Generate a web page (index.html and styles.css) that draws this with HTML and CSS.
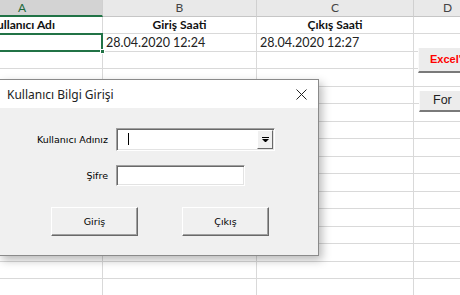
FILE: index.html
```html
<!DOCTYPE html>
<html>
<head>
<meta charset="utf-8">
<link rel="stylesheet" href="styles.css">
</head>
<body>
<div class="sheet">
  <div class="row head">
    <div class="cell a sel-head">A</div>
    <div class="cell b">B</div>
    <div class="cell c">C</div>
    <div class="cell d">D</div>
  </div>
  <div class="row r17 titles">
    <div class="cell a">Kullanıcı Adı</div>
    <div class="cell b">Giriş Saati</div>
    <div class="cell c">Çıkış Saati</div>
    <div class="cell d"></div>
  </div>
  <div class="row r18 data">
    <div class="cell a active"><span class="handle"></span></div>
    <div class="cell b">28.04.2020 12:24</div>
    <div class="cell c">28.04.2020 12:27</div>
    <div class="cell d"></div>
  </div>
  <div class="row r17"><div class="cell a"></div><div class="cell b"></div><div class="cell c"></div><div class="cell d"></div></div>
  <div class="row r18"><div class="cell a"></div><div class="cell b"></div><div class="cell c"></div><div class="cell d"></div></div>
  <div class="row r17"><div class="cell a"></div><div class="cell b"></div><div class="cell c"></div><div class="cell d"></div></div>
  <div class="row r18"><div class="cell a"></div><div class="cell b"></div><div class="cell c"></div><div class="cell d"></div></div>
  <div class="row r17"><div class="cell a"></div><div class="cell b"></div><div class="cell c"></div><div class="cell d"></div></div>
  <div class="row r18"><div class="cell a"></div><div class="cell b"></div><div class="cell c"></div><div class="cell d"></div></div>
  <div class="row r17"><div class="cell a"></div><div class="cell b"></div><div class="cell c"></div><div class="cell d"></div></div>
  <div class="row r18"><div class="cell a"></div><div class="cell b"></div><div class="cell c"></div><div class="cell d"></div></div>
  <div class="row r17"><div class="cell a"></div><div class="cell b"></div><div class="cell c"></div><div class="cell d"></div></div>
  <div class="row r18"><div class="cell a"></div><div class="cell b"></div><div class="cell c"></div><div class="cell d"></div></div>
  <div class="row r17"><div class="cell a"></div><div class="cell b"></div><div class="cell c"></div><div class="cell d"></div></div>
  <div class="row r18"><div class="cell a"></div><div class="cell b"></div><div class="cell c"></div><div class="cell d"></div></div>
  <div class="row r17"><div class="cell a"></div><div class="cell b"></div><div class="cell c"></div><div class="cell d"></div></div>
  <div class="row r18"><div class="cell a"></div><div class="cell b"></div><div class="cell c"></div><div class="cell d"></div></div>
</div>

<div class="sheet-btn excel-btn">Excel'</div>
<div class="sheet-btn form-btn">For</div>

<div class="dialog">
  <div class="titlebar">
    <span class="title">Kullanıcı Bilgi Girişi</span>
    <svg class="close" width="11" height="11" viewBox="0 0 11 11"><path d="M0.5 0.5 L10.5 10.5 M10.5 0.5 L0.5 10.5" stroke="#222" stroke-width="1" fill="none"/></svg>
  </div>
  <div class="body">
    <div class="form">
      <label class="lbl">Kullanıcı Adınız</label>
      <div class="combo">
        <div class="combo-text"><span class="caret"></span></div>
        <div class="combo-btn">
          <svg width="7" height="5" viewBox="0 0 7 5"><rect x="0" y="0" width="7" height="1" fill="#000"/><path d="M0 2 H7 L3.5 5.5 Z" fill="#000"/></svg>
        </div>
      </div>
      <label class="lbl">Şifre</label>
      <div class="textbox"></div>
    </div>
    <div class="buttons">
      <div class="btn">Giriş</div>
      <div class="btn">Çıkış</div>
    </div>
  </div>
</div>
</body>
</html>
```

FILE: styles.css
```css
* { box-sizing: border-box; }
html, body { margin: 0; padding: 0; }
body {
  width: 460px;
  height: 295px;
  overflow: hidden;
  background: #fff;
  position: relative;
  font-family: Lato, "Liberation Sans", sans-serif;
}
.sheet {
  margin-left: -58px;
  width: 540px;
}
.row {
  display: grid;
  grid-template-columns: 161px 154px 157px 68px;
}
.cell {
  border-right: 1px solid #d9d9d9;
  border-bottom: 1px solid #d9d9d9;
  font-size: 12px;
  color: #111;
  white-space: nowrap;
  overflow: hidden;
}
.head { height: 17px; }
.head .cell {
  background: #e9e9e9;
  color: #444;
  font-size: 12px;
  text-align: center;
  line-height: 16px;
  border-right: 1px solid #d0d0d0;
  border-bottom: 1px solid #c6c6c6;
}
.head .sel-head {
  background: #d3d3d3;
  color: #1d6a3c;
  border-bottom: 2px solid #217346;
  line-height: 15px;
}
.r17 { height: 17px; }
.r18 { height: 18px; }
.titles .cell {
  font-weight: bold;
  text-align: center;
  line-height: 16px;
  font-size: 12px;
}
.data .cell {
  line-height: 18px;
  padding-left: 3px;
  font-size: 12.5px;
  color: #222;
}
.data .active {
  position: relative;
  overflow: visible;
  border-right: 2px solid #217346;
  border-bottom: 2px solid #217346;
  box-shadow: inset 0 2px 0 #217346;
  margin-top: -1px;
  height: 19px;
}
.handle {
  position: absolute;
  right: -4px;
  bottom: -4px;
  width: 5px;
  height: 5px;
  background: #217346;
  border: 1px solid #fff;
}

.sheet-btn {
  position: absolute;
  background: #ececec;
  border-bottom: 2px solid #7a7a7a;
  border-left: 1px solid #fafafa;
  font-family: "Liberation Sans", Arial, sans-serif;
  white-space: nowrap;
}
.excel-btn {
  left: 418px;
  top: 48px;
  width: 42px;
  height: 25px;
  color: #f00;
  font-weight: bold;
  font-size: 11px;
  line-height: 23px;
  padding-left: 11px;
}
.form-btn {
  left: 419px;
  top: 91px;
  width: 41px;
  height: 21px;
  color: #222;
  font-size: 12.5px;
  line-height: 19px;
  padding-left: 13px;
}

.dialog {
  position: absolute;
  left: -1px;
  top: 79px;
  width: 320px;
  height: 177px;
  border: 1px solid #8a8a8a;
  background: #f0f0f0;
  box-shadow: 3px 4px 9px rgba(0,0,0,0.28);
  display: flex;
  flex-direction: column;
}
.titlebar {
  height: 28px;
  background: #fff;
  display: flex;
  align-items: center;
  justify-content: space-between;
  padding: 0 11px 0 7px;
}
.title {
  font-family: "Noto Sans", "Open Sans", sans-serif;
  font-size: 12px;
  color: #222;
}
.close { display: block; }
.body {
  flex: 1;
  padding-top: 20px;
}
.form {
  display: grid;
  grid-template-columns: 108px auto;
  column-gap: 8px;
  row-gap: 14px;
  align-items: center;
}
.lbl {
  justify-self: end;
  font-family: "DejaVu Sans", sans-serif;
  font-size: 9.5px;
  color: #000;
}
.combo {
  width: 159px;
  height: 23px;
  display: flex;
  border-top: 1px solid #a0a0a0;
  border-left: 1px solid #a0a0a0;
  border-right: 1px solid #fff;
  border-bottom: 1px solid #fff;
  box-shadow: inset 1px 1px 0 #696969, inset -1px -1px 0 #e3e3e3;
  background: #fff;
  padding: 1px;
}
.combo-text {
  flex: 1;
  padding: 3px 0 0 10px;
}
.caret {
  display: block;
  width: 1px;
  height: 12px;
  background: #000;
}
.combo-btn {
  width: 16px;
  background: #f0f0f0;
  border-top: 1px solid #fff;
  border-left: 1px solid #fff;
  border-right: 1px solid #696969;
  border-bottom: 1px solid #696969;
  display: flex;
  align-items: center;
  justify-content: center;
}
.combo-btn svg { display: block; }
.textbox {
  width: 129px;
  height: 21px;
  background: #fff;
  border-top: 1px solid #a0a0a0;
  border-left: 1px solid #a0a0a0;
  border-right: 1px solid #fff;
  border-bottom: 1px solid #fff;
  box-shadow: inset 1px 1px 0 #696969, inset -1px -1px 0 #e3e3e3;
}
.buttons {
  display: flex;
  gap: 44px;
  padding: 21px 0 0 51px;
}
.btn {
  width: 87px;
  height: 29px;
  background: #f0f0f0;
  border-top: 1px solid #fff;
  border-left: 1px solid #fff;
  border-right: 1px solid #696969;
  border-bottom: 1px solid #696969;
  box-shadow: inset -1px -1px 0 #a0a0a0;
  display: flex;
  align-items: center;
  justify-content: center;
  font-family: "DejaVu Sans", sans-serif;
  font-size: 9.5px;
  color: #000;
}
```
